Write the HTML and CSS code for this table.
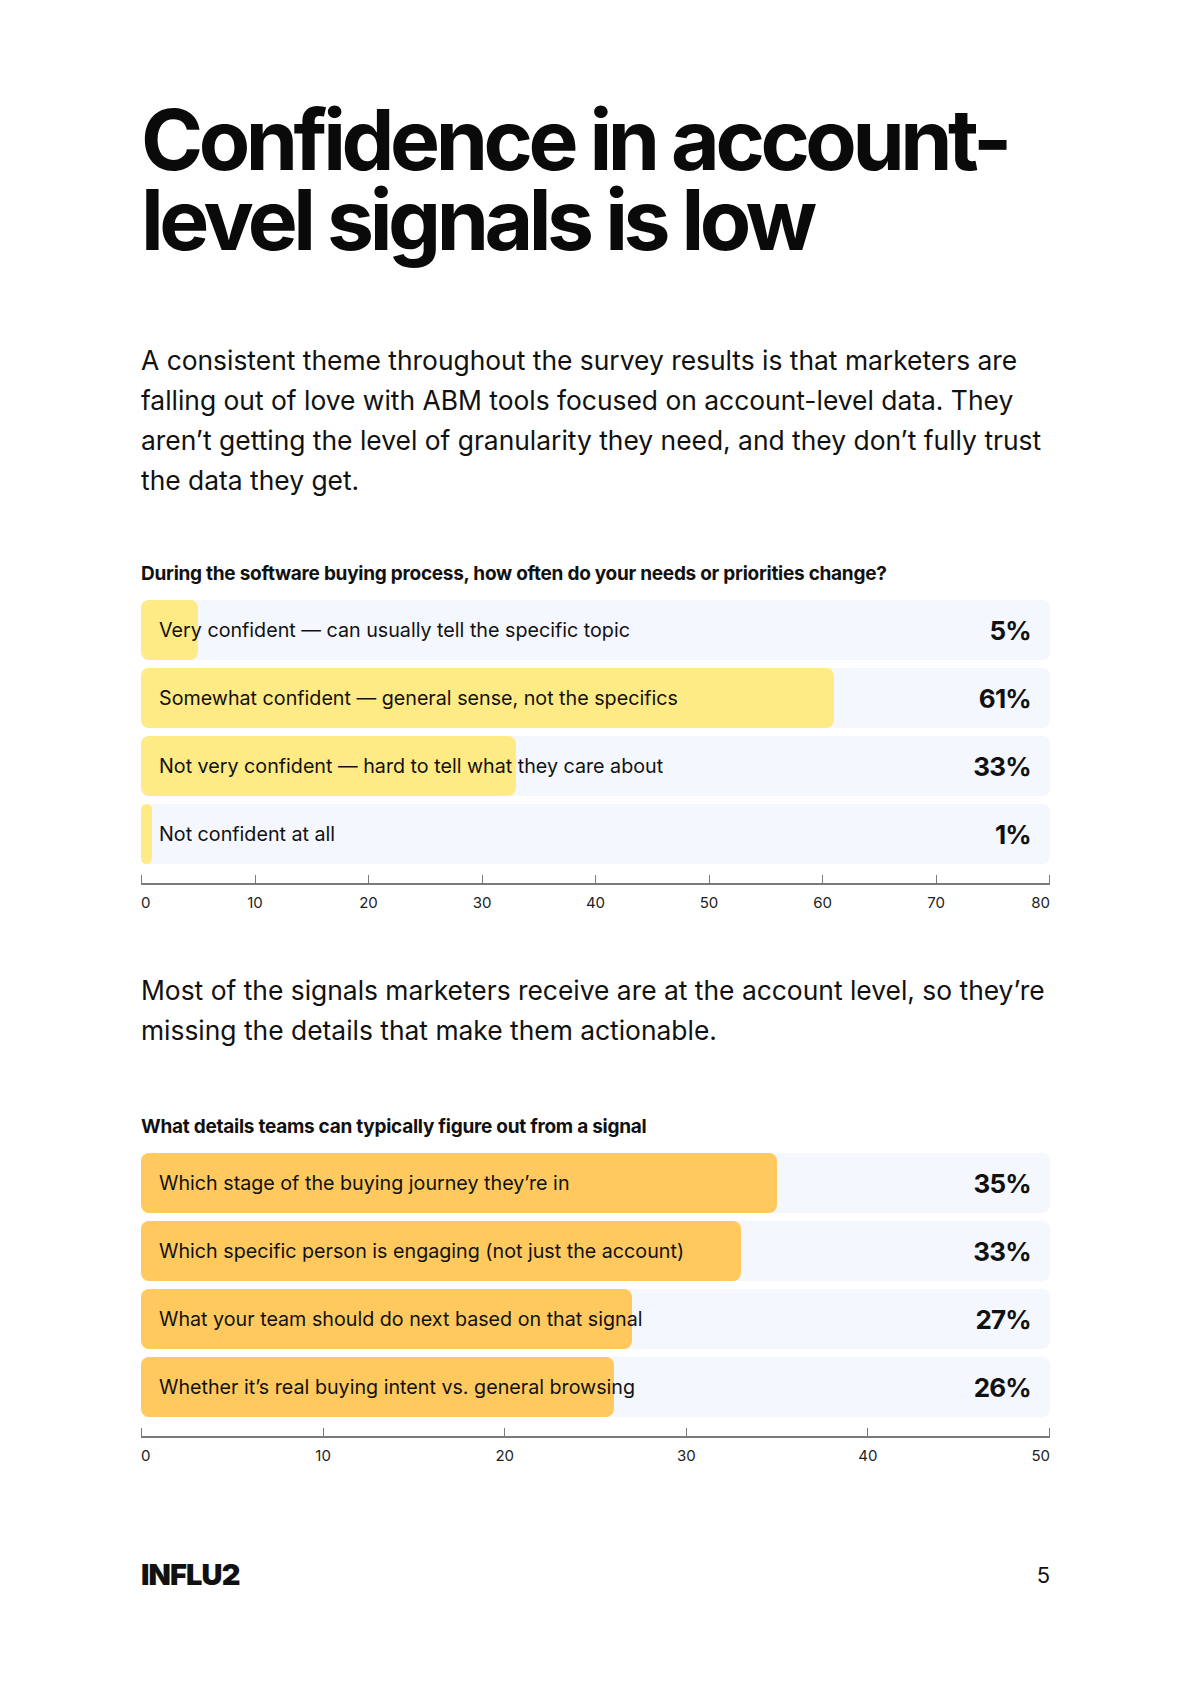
FILE: index.html
```html
<!DOCTYPE html>
<html lang="en">
<head>
<meta charset="utf-8">
<title>Confidence in account-level signals is low</title>
<link rel="stylesheet" href="styles.css">
</head>
<body>
<main class="page">
  <h1 class="title">Confidence in account-<br>level signals is low</h1>
  <p class="lead">A consistent theme throughout the survey results is that marketers are falling out of love with ABM tools focused on account-level data. They aren’t getting the level of granularity they need, and they don’t fully trust the data they get.</p>

  <section class="chart chart-one">
    <h2 class="chart-title">During the software buying process, how often do your needs or priorities change?</h2>
    <div class="rows">
      <div class="row"><div class="fill yellow" style="width:6.25%"></div><div class="content"><span class="label">Very confident — can usually tell the specific topic</span><span class="pct">5%</span></div></div>
      <div class="row"><div class="fill yellow" style="width:76.25%"></div><div class="content"><span class="label">Somewhat confident — general sense, not the specifics</span><span class="pct">61%</span></div></div>
      <div class="row"><div class="fill yellow" style="width:41.25%"></div><div class="content"><span class="label">Not very confident — hard to tell what they care about</span><span class="pct">33%</span></div></div>
      <div class="row"><div class="fill yellow" style="width:1.25%"></div><div class="content"><span class="label">Not confident at all</span><span class="pct">1%</span></div></div>
    </div>
    <div class="axis">
      <div class="ticks"><span></span><span></span><span></span><span></span><span></span><span></span><span></span><span></span><span></span></div>
      <div class="axis-line"></div>
      <div class="labels"><span><i>0</i></span><span><i>10</i></span><span><i>20</i></span><span><i>30</i></span><span><i>40</i></span><span><i>50</i></span><span><i>60</i></span><span><i>70</i></span><span><i>80</i></span></div>
    </div>
  </section>

  <p class="lead lead-two">Most of the signals marketers receive are at the account level, so they’re missing the details that make them actionable.</p>

  <section class="chart chart-two">
    <h2 class="chart-title">What details teams can typically figure out from a signal</h2>
    <div class="rows">
      <div class="row"><div class="fill orange" style="width:70%"></div><div class="content"><span class="label">Which stage of the buying journey they’re in</span><span class="pct">35%</span></div></div>
      <div class="row"><div class="fill orange" style="width:66%"></div><div class="content"><span class="label">Which specific person is engaging (not just the account)</span><span class="pct">33%</span></div></div>
      <div class="row"><div class="fill orange" style="width:54%"></div><div class="content"><span class="label">What your team should do next based on that signal</span><span class="pct">27%</span></div></div>
      <div class="row"><div class="fill orange" style="width:52%"></div><div class="content"><span class="label">Whether it’s real buying intent vs. general browsing</span><span class="pct">26%</span></div></div>
    </div>
    <div class="axis">
      <div class="ticks"><span></span><span></span><span></span><span></span><span></span><span></span></div>
      <div class="axis-line"></div>
      <div class="labels"><span><i>0</i></span><span><i>10</i></span><span><i>20</i></span><span><i>30</i></span><span><i>40</i></span><span><i>50</i></span></div>
    </div>
  </section>

  <footer class="footer">
    <span class="logo">INFLU2</span>
    <span class="page-num">5</span>
  </footer>
</main>
</body>
</html>
```
FILE: styles.css
```css
* { box-sizing: border-box; }
html, body { margin: 0; padding: 0; background: #ffffff; }
body {
  font-family: Inter, "Noto Sans", "Liberation Sans", sans-serif;
  color: #111111;
  width: 1190px;
}
.page {
  padding: 100px 140px 0 141px;
  display: flex;
  flex-direction: column;
}
.title {
  margin: 0;
  font-size: 84px;
  line-height: 80px;
  font-weight: 700;
  letter-spacing: -0.053em;
  color: #0a0a0a;
}
.lead {
  margin: 80px 0 0;
  font-size: 26.4px;
  line-height: 40px;
  font-weight: 400;
  letter-spacing: 0;
}
.lead-two { margin-top: 58px; }
.chart { margin-top: 62px; }
.chart-two { margin-top: 65px; }
.chart-title {
  margin: 0 0 14px;
  font-size: 19px;
  line-height: 24px;
  font-weight: 700;
  letter-spacing: -0.014em;
}
.rows { display: flex; flex-direction: column; gap: 8px; }
.row {
  display: grid;
  height: 60px;
  background: #f4f7fe;
  border-radius: 8px;
}
.fill {
  grid-area: 1 / 1;
  height: 100%;
  border-radius: 8px;
}
.yellow { background: #ffeb85; }
.orange { background: #ffc95e; }
.content {
  grid-area: 1 / 1;
  display: flex;
  align-items: center;
  justify-content: space-between;
  padding: 0 19px 0 18px;
}
.label { font-size: 19.7px; letter-spacing: 0; }
.pct { font-size: 26px; font-weight: 700; letter-spacing: -0.03em; }
.axis { margin-top: 11px; }
.ticks {
  display: flex;
  justify-content: space-between;
  height: 8px;
}
.ticks span { width: 1px; background: #7a7a7a; }
.axis-line { height: 2px; background: #7a7a7a; }
.labels {
  display: flex;
  justify-content: space-between;
  margin-top: 9px;
  font-size: 15px;
  line-height: 18px;
  color: #222222;
}
.labels span { width: 1px; display: flex; justify-content: center; }
.labels span:first-child { justify-content: flex-start; }
.labels span:last-child { justify-content: flex-end; }
.labels i { font-style: normal; white-space: nowrap; }
.footer {
  margin-top: 94px;
  display: flex;
  justify-content: space-between;
  align-items: center;
}
.logo {
  font-size: 29px;
  font-weight: 900;
  letter-spacing: -0.03em;
  line-height: 32px;
}
.page-num { font-size: 22px; line-height: 32px; }
```
